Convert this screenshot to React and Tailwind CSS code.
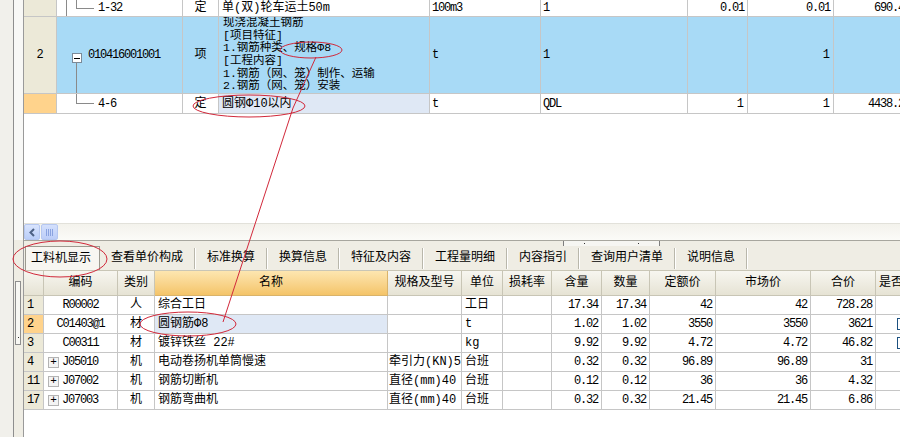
import React from "react";

const cell = "shrink-0 border-r border-b border-[#c6c6c6] overflow-hidden whitespace-nowrap flex items-center";
const num = "tracking-[-1.2px]";

function TreeLines({ rows }) {
  return (
    <svg className="absolute left-0 top-0" width="126" height="77">
      {rows}
    </svg>
  );
}

function TopGrid() {
  return (
    <div className="flex flex-col h-[223px] bg-white overflow-hidden">
      <div className="flex h-[17px]">
        <div className={`${cell} w-[33px] bg-[#ece9d8]`}></div>
        <div className={`${cell} w-[126px] relative pl-[41px] ${num}`}>
          <TreeLines
            rows={
              <g stroke="#8a8a8a" strokeWidth="1" shapeRendering="crispEdges">
                <line x1="9.5" y1="0" x2="9.5" y2="17" />
                <line x1="19.5" y1="0" x2="19.5" y2="8.5" />
                <line x1="19.5" y1="8.5" x2="37" y2="8.5" />
              </g>
            }
          />
          <span className="relative">1-32</span>
        </div>
        <div className={`${cell} w-[36px] justify-center`}>定</div>
        <div className={`${cell} w-[211px] pl-[3px]`}>单(双)轮车运土50m</div>
        <div className={`${cell} w-[111px] pl-[2px] ${num}`}>100m3</div>
        <div className={`${cell} w-[147px] pl-[2px]`}>1</div>
        <div className={`${cell} w-[60px] justify-end pr-[3px] ${num}`}>0.01</div>
        <div className={`${cell} w-[86px] justify-end pr-[3px] ${num}`}>0.01</div>
        <div className={`${cell} w-[80px] justify-end pr-[3px] ${num}`}>690.45</div>
      </div>

      <div className="flex h-[77px]">
        <div className={`${cell} w-[33px] bg-[#ece9d8] justify-center`}>2</div>
        <div className={`${cell} w-[126px] relative pl-[31px] bg-[#a8daf6] ${num}`}>
          <TreeLines
            rows={
              <g shapeRendering="crispEdges">
                <line x1="19.5" y1="45" x2="19.5" y2="77" stroke="#8a8a8a" />
                <rect x="15.5" y="36.5" width="9" height="9" fill="#fff" stroke="#7a8a99" />
                <line x1="17" y1="41" x2="23" y2="41" stroke="#000" />
              </g>
            }
          />
          <span className="relative">010416001001</span>
        </div>
        <div className={`${cell} w-[36px] justify-center bg-[#a8daf6]`}>项</div>
        <div className={`${cell} w-[211px] pl-[4px] bg-[#a8daf6] flex-col !items-start justify-center text-[11.5px] leading-[12.6px]`}>
          <span>现浇混凝土钢筋</span>
          <span>[项目特征]</span>
          <span>1.钢筋种类、规格Φ8</span>
          <span>[工程内容]</span>
          <span>1.钢筋（网、笼）制作、运输</span>
          <span>2.钢筋（网、笼）安装</span>
        </div>
        <div className={`${cell} w-[111px] pl-[2px] bg-[#a8daf6]`}>t</div>
        <div className={`${cell} w-[147px] pl-[2px] bg-[#a8daf6]`}>1</div>
        <div className={`${cell} w-[60px] bg-[#a8daf6]`}></div>
        <div className={`${cell} w-[86px] justify-end pr-[3px] bg-[#a8daf6]`}>1</div>
        <div className={`${cell} w-[80px] bg-[#a8daf6]`}></div>
      </div>

      <div className="flex h-[20px]">
        <div className={`${cell} w-[33px] bg-[#ffd38c]`}></div>
        <div className={`${cell} w-[126px] relative pl-[41px] ${num}`}>
          <TreeLines
            rows={
              <g stroke="#8a8a8a" shapeRendering="crispEdges">
                <line x1="19.5" y1="0" x2="19.5" y2="9.5" />
                <line x1="19.5" y1="9.5" x2="37" y2="9.5" />
              </g>
            }
          />
          <span className="relative">4-6</span>
        </div>
        <div className={`${cell} w-[36px] justify-center`}>定</div>
        <div className={`${cell} w-[211px] pl-[3px] bg-[#dfe8f5]`}>圆钢Φ10以内</div>
        <div className={`${cell} w-[111px] pl-[2px]`}>t</div>
        <div className={`${cell} w-[147px] pl-[2px] ${num}`}>QDL</div>
        <div className={`${cell} w-[60px] justify-end pr-[3px]`}>1</div>
        <div className={`${cell} w-[86px] justify-end pr-[3px]`}>1</div>
        <div className={`${cell} w-[80px] justify-end pr-[3px] ${num}`}>4438.21</div>
      </div>
    </div>
  );
}

function HScroll() {
  return (
    <div className="flex h-[17px] bg-gradient-to-b from-[#f3f2ec] to-[#fbfbf8] border-t border-[#e2e1da]">
      <div className="w-[16px] h-[16px] rounded-[2px] bg-gradient-to-b from-[#d9e4fd] to-[#b9cdf9] border border-[#b5c7f0] flex items-center justify-center">
        <svg width="8" height="9" viewBox="0 0 8 9">
          <path d="M6 1 L2.5 4.5 L6 8" stroke="#4d6185" strokeWidth="2" fill="none" />
        </svg>
      </div>
      <div className="w-[17px] h-[16px] ml-[1px] rounded-[2px] bg-gradient-to-b from-[#d4e0fc] to-[#bccdf8] border border-[#b5c7f0] flex items-center justify-center gap-[1px]">
        <div className="w-[1px] h-[7px] bg-[#8aa3e0]"></div>
        <div className="w-[1px] h-[7px] bg-[#8aa3e0]"></div>
        <div className="w-[1px] h-[7px] bg-[#8aa3e0]"></div>
        <div className="w-[1px] h-[7px] bg-[#8aa3e0]"></div>
      </div>
    </div>
  );
}

const tabs = ["查看单价构成", "标准换算", "换算信息", "特征及内容", "工程量明细", "内容指引", "查询用户清单", "说明信息"];

function Tabs() {
  return (
    <div className="flex flex-col">
      <div className="h-[6px] border-t border-[#a7a69e] bg-[#efede4] flex">
        <div className="ml-[539px] w-[97px] h-[6px] border border-t-0 border-[#7e7e7e] bg-[#f6f6f2] flex items-center justify-between px-[20px]">
          <div className="w-[1px] h-[1px] bg-[#333]"></div>
          <div className="w-[1px] h-[1px] bg-[#333]"></div>
        </div>
      </div>
      <div className="h-[25px] bg-[#efede4] flex items-end pl-[1px] border-b border-[#c9c6b6]">
        <div className="h-[24px] w-[75px] bg-[#f7f6f1] border border-b-0 border-[#9c9a90] flex items-center pl-[5px]">
          工料机显示
        </div>
        {tabs.map((t) => (
          <div key={t} className="h-[24px] flex items-center">
            <span className="px-[11px]">{t}</span>
            <div className="w-[1px] h-[21px] bg-[#b9b7ab] border-r border-white box-content"></div>
          </div>
        ))}
      </div>
    </div>
  );
}

const hd = "shrink-0 border-r border-b border-[#c8c5b5] bg-gradient-to-b from-[#f7f6f0] to-[#e6e3d4] flex items-center justify-center overflow-hidden whitespace-nowrap";

const rows = [
  { n: "1", code: "R00002", t: "人", name: "综合工日", spec: "", unit: "工日", a: "17.34", b: "17.34", c: "42", d: "42", e: "728.28" },
  { n: "2", code: "C01403@1", t: "材", name: "圆钢筋Φ8", spec: "", unit: "t", a: "1.02", b: "1.02", c: "3550", d: "3550", e: "3621", sel: true, chk: true },
  { n: "3", code: "C00311", t: "材", name: "镀锌铁丝 22#", spec: "", unit: "kg", a: "9.92", b: "9.92", c: "4.72", d: "4.72", e: "46.82", chk: true },
  { n: "4", code: "J05010", plus: true, t: "机", name: "电动卷扬机单筒慢速", spec: "牵引力(KN)5", unit: "台班", a: "0.32", b: "0.32", c: "96.89", d: "96.89", e: "31" },
  { n: "11", code: "J07002", plus: true, t: "机", name: "钢筋切断机", spec: "直径(mm)40", unit: "台班", a: "0.12", b: "0.12", c: "36", d: "36", e: "4.32" },
  { n: "17", code: "J07003", plus: true, t: "机", name: "钢筋弯曲机", spec: "直径(mm)40", unit: "台班", a: "0.32", b: "0.32", c: "21.45", d: "21.45", e: "6.86" },
];

function BottomGrid() {
  return (
    <div className="flex flex-col flex-1 bg-white overflow-hidden">
      <div className="flex h-[25px]">
        <div className={`${hd} w-[20px]`}></div>
        <div className={`${hd} w-[74px]`}>编码</div>
        <div className={`${hd} w-[37px]`}>类别</div>
        <div className="shrink-0 w-[233px] border-r border-b border-[#d9b36a] bg-gradient-to-b from-[#fde6b0] to-[#f4c468] flex items-center justify-center">名称</div>
        <div className={`${hd} w-[74px]`}>规格及型号</div>
        <div className={`${hd} w-[41px]`}>单位</div>
        <div className={`${hd} w-[49px]`}>损耗率</div>
        <div className={`${hd} w-[50px]`}>含量</div>
        <div className={`${hd} w-[48px]`}>数量</div>
        <div className={`${hd} w-[66px]`}>定额价</div>
        <div className={`${hd} w-[95px]`}>市场价</div>
        <div className={`${hd} w-[65px]`}>合价</div>
        <div className={`${hd} w-[60px] !justify-start pl-[3px]`}>是否计价</div>
      </div>
      {rows.map((r) => (
        <div key={r.n} className="flex h-[19px]">
          <div className={`${cell} w-[20px] pl-[3px] ${num} ${r.sel ? "bg-[#ffd38c]" : "bg-[#ece9d8]"}`}>{r.n}</div>
          <div className={`${cell} w-[74px] ${r.plus ? "pl-[4px]" : "justify-center"}`}>
            {r.plus && (
              <div className="w-[11px] h-[11px] mr-[3px] border border-[#b4b4b4] bg-[#f4f4f4] flex items-center justify-center text-[11px] leading-none">+</div>
            )}
            <span className={num}>{r.code}</span>
          </div>
          <div className={`${cell} w-[37px] justify-center`}>{r.t}</div>
          <div className={`${cell} w-[233px] pl-[3px] ${r.sel ? "bg-[#dfe8f5]" : ""}`}>{r.name}</div>
          <div className={`${cell} w-[74px] pl-[1px]`}>{r.spec}</div>
          <div className={`${cell} w-[41px] pl-[3px]`}>{r.unit}</div>
          <div className={`${cell} w-[49px]`}></div>
          <div className={`${cell} w-[50px] justify-end pr-[3px] ${num}`}>{r.a}</div>
          <div className={`${cell} w-[48px] justify-end pr-[3px] ${num}`}>{r.b}</div>
          <div className={`${cell} w-[66px] justify-end pr-[3px] ${num}`}>{r.c}</div>
          <div className={`${cell} w-[95px] justify-end pr-[3px] ${num}`}>{r.d}</div>
          <div className={`${cell} w-[65px] justify-end pr-[3px] ${num}`}>{r.e}</div>
          <div className={`${cell} w-[60px] pl-[21px]`}>
            {r.chk && <div className="w-[12px] h-[12px] border border-[#1c5180] bg-white"></div>}
          </div>
        </div>
      ))}
    </div>
  );
}

function Annotations() {
  return (
    <svg className="absolute inset-0 pointer-events-none" width="900" height="437">
      <g stroke="#d1283a" strokeWidth="1" fill="none">
        <ellipse cx="311" cy="50" rx="31" ry="8" />
        <ellipse cx="249" cy="106" rx="56" ry="11" />
        <ellipse cx="60" cy="259" rx="47" ry="18" />
        <ellipse cx="188" cy="324" rx="48" ry="12" />
        <line x1="316" y1="57" x2="293" y2="108" />
        <line x1="293" y1="108" x2="223" y2="322" />
      </g>
    </svg>
  );
}

export default function App() {
  return (
    <div className="relative w-[900px] h-[437px] overflow-hidden bg-[#f1f0eb] text-[12px] text-black font-['Liberation_Mono','Noto_Sans_CJK_SC',monospace] flex">
      <div className="w-[13px] shrink-0 bg-[#f1f0eb]"></div>
      <div className="w-[1px] shrink-0 bg-[#8e8e8e]"></div>
      <div className="w-[9px] shrink-0 flex flex-col">
        <div className="h-[240px] bg-[#f8f8f6]"></div>
        <div className="flex-1 bg-[#efede4] pt-[41px] pl-[1px]">
          <div className="w-[6px] h-[64px] border border-[#8e8e8e] bg-[#f7f7f3] flex items-end justify-center pb-[6px]">
            <div className="w-[1px] h-[1px] bg-[#333]"></div>
          </div>
        </div>
      </div>
      <div className="w-[1px] shrink-0 bg-[#9a9a9a]"></div>
      <div className="w-[876px] shrink-0 flex flex-col">
        <TopGrid />
        <HScroll />
        <Tabs />
        <BottomGrid />
      </div>
      <Annotations />
    </div>
  );
}
